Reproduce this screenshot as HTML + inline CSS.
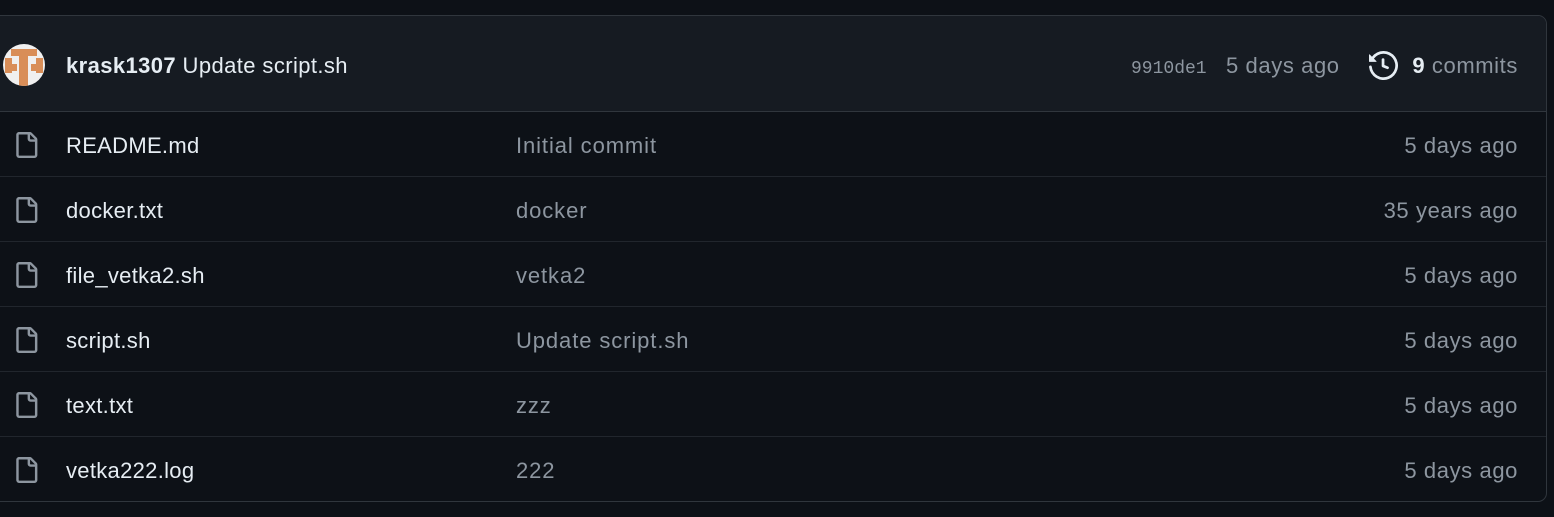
<!DOCTYPE html>
<html><head><style>
body{margin:0;background:#0d1117;width:1554px;height:517px;overflow:hidden;font-family:"Liberation Sans",sans-serif;}
.box{position:absolute;left:-10px;top:15px;width:1555px;height:485px;border:1px solid #30363d;border-radius:9px;overflow:hidden;}
.hdr{height:95px;background:#161b22;border-bottom:1px solid #30363d;position:relative;}
.row{height:64px;border-top:1px solid #21262d;position:relative;}
.row:first-of-type{border-top:none}
.t{position:absolute;font-size:22px;line-height:22px;letter-spacing:0.6px;white-space:nowrap}
.name{left:75px;color:#e6edf3;letter-spacing:0.3px}
.msg{left:525px;color:#8d96a0;letter-spacing:0.9px}
.time{right:28px;color:#8d96a0;}
.ic{position:absolute;left:22px;}
</style></head><body>
<div class="box">
<div class="hdr">
 <svg style="position:absolute;left:12px;top:28px" width="42" height="42" viewBox="0 0 42 42">
  <defs><clipPath id="c"><circle cx="21" cy="21" r="21"/></clipPath></defs>
  <g clip-path="url(#c)"><rect width="42" height="42" fill="#f0f0f0"/>
  <g fill="#d98e58"><rect x="8" y="5" width="26" height="7"/><rect x="16" y="5" width="9" height="37"/><rect x="2" y="14" width="7" height="15"/><rect x="33" y="14" width="7" height="15"/><rect x="2" y="20" width="12" height="7"/><rect x="28" y="20" width="12" height="7"/></g></g>
 </svg>
 <div class="t" style="left:75px;top:39px;color:#e6edf3;letter-spacing:0.4px"><b>krask1307</b> Update script.sh</div>
 <div class="t" style="left:1140px;top:42px;font-family:'Liberation Mono',monospace;font-size:18px;color:#8d96a0;letter-spacing:0">9910de1</div>
 <div class="t" style="left:1235px;top:39px;color:#8d96a0">5 days ago</div>
 <svg style="position:absolute;left:1378px;top:35px" width="29" height="29" viewBox="0 0 16 16" fill="#e6edf3"><path d="m.427 1.927 1.215 1.215a8.002 8.002 0 1 1-1.6 5.685.75.75 0 1 1 1.493-.154 6.5 6.5 0 1 0 1.18-4.458l1.358 1.358A.25.25 0 0 1 3.896 6H.25A.25.25 0 0 1 0 5.75V2.104a.25.25 0 0 1 .427-.177ZM7.750 4a.75.75 0 0 1 .75.75v2.992l2.028.812a.75.75 0 0 1-.557 1.392l-2.5-1A.751.751 0 0 1 7 8.25v-3.5A.75.75 0 0 1 7.75 4Z"/></svg>
 <div class="t" style="right:28px;top:39px;color:#8d96a0"><b style="color:#e6edf3">9</b> commits</div>
</div>
<div class="rows">
 <div class="row"><svg class="ic" style="top:19px" width="26" height="28" viewBox="0 0 16 16" fill="#8d96a0"><path d="M2 1.75C2 .784 2.784 0 3.75 0h6.586c.464 0 .909.184 1.237.513l2.914 2.914c.329.328.513.773.513 1.237v9.586A1.75 1.75 0 0 1 13.25 16h-9.5A1.75 1.75 0 0 1 2 14.25Zm1.75-.25a.25.25 0 0 0-.25.25v12.5c0 .138.112.25.25.25h9.5a.25.25 0 0 0 .25-.25V6h-2.75A1.75 1.75 0 0 1 9 4.25V1.5Zm6.75.062V4.25c0 .138.112.25.25.25h2.688l-.011-.013-2.914-2.914-.013-.011Z"/></svg><div class="t name" style="top:23px">README.md</div><div class="t msg" style="top:23px">Initial commit</div><div class="t time" style="top:23px">5 days ago</div></div>
 <div class="row"><svg class="ic" style="top:19px" width="26" height="28" viewBox="0 0 16 16" fill="#8d96a0"><path d="M2 1.75C2 .784 2.784 0 3.75 0h6.586c.464 0 .909.184 1.237.513l2.914 2.914c.329.328.513.773.513 1.237v9.586A1.75 1.75 0 0 1 13.25 16h-9.5A1.75 1.75 0 0 1 2 14.25Zm1.75-.25a.25.25 0 0 0-.25.25v12.5c0 .138.112.25.25.25h9.5a.25.25 0 0 0 .25-.25V6h-2.75A1.75 1.75 0 0 1 9 4.25V1.5Zm6.75.062V4.25c0 .138.112.25.25.25h2.688l-.011-.013-2.914-2.914-.013-.011Z"/></svg><div class="t name" style="top:23px">docker.txt</div><div class="t msg" style="top:23px">docker</div><div class="t time" style="top:23px">35 years ago</div></div>
 <div class="row"><svg class="ic" style="top:19px" width="26" height="28" viewBox="0 0 16 16" fill="#8d96a0"><path d="M2 1.75C2 .784 2.784 0 3.75 0h6.586c.464 0 .909.184 1.237.513l2.914 2.914c.329.328.513.773.513 1.237v9.586A1.75 1.75 0 0 1 13.25 16h-9.5A1.75 1.75 0 0 1 2 14.25Zm1.75-.25a.25.25 0 0 0-.25.25v12.5c0 .138.112.25.25.25h9.5a.25.25 0 0 0 .25-.25V6h-2.75A1.75 1.75 0 0 1 9 4.25V1.5Zm6.75.062V4.25c0 .138.112.25.25.25h2.688l-.011-.013-2.914-2.914-.013-.011Z"/></svg><div class="t name" style="top:23px">file_vetka2.sh</div><div class="t msg" style="top:23px">vetka2</div><div class="t time" style="top:23px">5 days ago</div></div>
 <div class="row"><svg class="ic" style="top:19px" width="26" height="28" viewBox="0 0 16 16" fill="#8d96a0"><path d="M2 1.75C2 .784 2.784 0 3.75 0h6.586c.464 0 .909.184 1.237.513l2.914 2.914c.329.328.513.773.513 1.237v9.586A1.75 1.75 0 0 1 13.25 16h-9.5A1.75 1.75 0 0 1 2 14.25Zm1.75-.25a.25.25 0 0 0-.25.25v12.5c0 .138.112.25.25.25h9.5a.25.25 0 0 0 .25-.25V6h-2.75A1.75 1.75 0 0 1 9 4.25V1.5Zm6.75.062V4.25c0 .138.112.25.25.25h2.688l-.011-.013-2.914-2.914-.013-.011Z"/></svg><div class="t name" style="top:23px">script.sh</div><div class="t msg" style="top:23px">Update script.sh</div><div class="t time" style="top:23px">5 days ago</div></div>
 <div class="row"><svg class="ic" style="top:19px" width="26" height="28" viewBox="0 0 16 16" fill="#8d96a0"><path d="M2 1.75C2 .784 2.784 0 3.75 0h6.586c.464 0 .909.184 1.237.513l2.914 2.914c.329.328.513.773.513 1.237v9.586A1.75 1.75 0 0 1 13.25 16h-9.5A1.75 1.75 0 0 1 2 14.25Zm1.75-.25a.25.25 0 0 0-.25.25v12.5c0 .138.112.25.25.25h9.5a.25.25 0 0 0 .25-.25V6h-2.75A1.75 1.75 0 0 1 9 4.25V1.5Zm6.75.062V4.25c0 .138.112.25.25.25h2.688l-.011-.013-2.914-2.914-.013-.011Z"/></svg><div class="t name" style="top:23px">text.txt</div><div class="t msg" style="top:23px">zzz</div><div class="t time" style="top:23px">5 days ago</div></div>
 <div class="row"><svg class="ic" style="top:19px" width="26" height="28" viewBox="0 0 16 16" fill="#8d96a0"><path d="M2 1.75C2 .784 2.784 0 3.75 0h6.586c.464 0 .909.184 1.237.513l2.914 2.914c.329.328.513.773.513 1.237v9.586A1.75 1.75 0 0 1 13.25 16h-9.5A1.75 1.75 0 0 1 2 14.25Zm1.75-.25a.25.25 0 0 0-.25.25v12.5c0 .138.112.25.25.25h9.5a.25.25 0 0 0 .25-.25V6h-2.75A1.75 1.75 0 0 1 9 4.25V1.5Zm6.75.062V4.25c0 .138.112.25.25.25h2.688l-.011-.013-2.914-2.914-.013-.011Z"/></svg><div class="t name" style="top:23px">vetka222.log</div><div class="t msg" style="top:23px">222</div><div class="t time" style="top:23px">5 days ago</div></div>
</div>
</div>
</body></html>
